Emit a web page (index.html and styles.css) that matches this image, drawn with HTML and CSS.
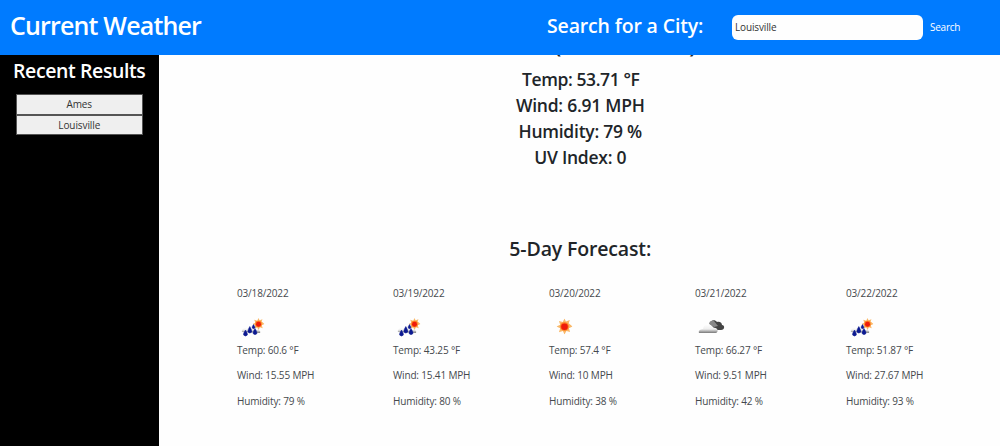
FILE: index.html
```html
<!DOCTYPE html>
<html lang="en">
<head>
<meta charset="utf-8">
<title>Current Weather</title>
<link rel="stylesheet" href="styles.css">
</head>
<body>
<svg class="defs" aria-hidden="true">
  <defs>
    <linearGradient id="cloud" x1="0" y1="0" x2="0" y2="1">
      <stop offset="0" stop-color="#fff"/><stop offset=".55" stop-color="#eee"/><stop offset="1" stop-color="#777"/>
    </linearGradient>
    <symbol id="sun" viewBox="0 0 16 16">
      <path fill="#f9b868" d="M8 0l1.4 3 3.9-1.4-1.1 3.2L16 8l-3.6 1.7 1.2 3.8-3.7-1.1L8 16l-1.6-3.5-4 1.2 1.3-3.9L0 8l3.7-1.7-1.3-3.9 3.9 1.2z"/>
      <circle cx="8" cy="8" r="4.3" fill="#ff7a1e"/><circle cx="8" cy="8.2" r="3.3" fill="#ee1c0a"/>
    </symbol>
    <symbol id="rain" viewBox="0 0 34 28">
      <use href="#sun" x="16.500" y="4" width="12" height="12"/>
      <path fill="url(#cloud)" d="M6 18c-1-3 3-5 5-3 2-4 8-3 9 1 3-1 5 1 4 3z"/>
      <path fill="#0c1a91" stroke="#0c1a91" stroke-width=".5" d="M9.500 16q-2.400 3.500-1.900 5 1.900 2.200 3.800 0 .4-1.500-1.900-5zM13.800 12.500q-2.400 4-1.900 5.500 1.900 2.200 3.900 0 .4-1.500-2-5.500zM19 14.500q-2.400 3.600-1.900 5.100 1.900 2.200 3.900 0 .4-1.500-2-5.100zM17.500 10.500q-1.700 2.300-1.300 3.400 1.300 1.500 2.700 0 .3-1.100-1.400-3.400z"/>
    </symbol>
    <symbol id="clouds" viewBox="0 0 34 28">
      <path fill="#444" d="M16 10c0-4 5-5 7-2 3-1 5 1 5 3 3 0 3 5-1 5h-5z"/>
      <path fill="#888" d="M15 10c0-3 3-4 5-3l4 5-4 1z"/>
      <path fill="url(#cloud)" d="M5 19c-1-3 2-4 4-4 1-6 8-6 10-1 5-1 6 4 3 5H6z"/>
    </symbol>
  </defs>
</svg>
<header class="header">
  <h1 class="brand">Current Weather</h1>
  <h3 class="prompt">Search for a City:</h3>
  <input class="city" type="text" value="Louisville">
  <button class="search" type="button">Search</button>
</header>
<div class="page">
  <aside class="sidebar">
    <h3 class="recent">Recent Results</h3>
    <button class="result" type="button">Ames</button>
    <button class="result" type="button">Louisville</button>
  </aside>
  <main class="main">
    <section class="today">
      <h3 class="place">Louisville (03/17/2022)</h3>
      <h4 class="stat">Temp: 53.71 °F</h4>
      <h4 class="stat">Wind: 6.91 MPH</h4>
      <h4 class="stat">Humidity: 79 %</h4>
      <h4 class="stat">UV Index: 0</h4>
    </section>
    <h3 class="forecast-title">5-Day Forecast:</h3>
    <section class="forecast">
      <div class="day"><p>03/18/2022</p><svg class="icon"><use href="#rain"/></svg><p>Temp: 60.6 °F</p><p>Wind: 15.55 MPH</p><p>Humidity: 79 %</p></div>
      <div class="day"><p>03/19/2022</p><svg class="icon"><use href="#rain"/></svg><p>Temp: 43.25 °F</p><p>Wind: 15.41 MPH</p><p>Humidity: 80 %</p></div>
      <div class="day"><p>03/20/2022</p><svg class="icon"><use href="#sun" x="8.500" y="4.500" width="16" height="16"/></svg><p>Temp: 57.4 °F</p><p>Wind: 10 MPH</p><p>Humidity: 38 %</p></div>
      <div class="day"><p>03/21/2022</p><svg class="icon"><use href="#clouds"/></svg><p>Temp: 66.27 °F</p><p>Wind: 9.51 MPH</p><p>Humidity: 42 %</p></div>
      <div class="day"><p>03/22/2022</p><svg class="icon"><use href="#rain"/></svg><p>Temp: 51.87 °F</p><p>Wind: 27.67 MPH</p><p>Humidity: 93 %</p></div>
    </section>
  </main>
</div>
</body>
</html>
```
FILE: styles.css
```css
* { box-sizing: border-box; }
body {
  margin: 0;
  height: 446px;
  overflow: hidden;
  display: flex;
  flex-direction: column;
  background: #fefefe;
  color: #212529;
  font-family: "Segoe UI", "Open Sans", "Noto Sans", sans-serif;
  font-size: 10px;
}
h1, h3, h4, p { margin: 0; white-space: nowrap; }
h1, h3, h4 { font-weight: 550; }
.defs { position: absolute; width: 0; height: 0; }
.header {
  flex: none;
  height: 55px;
  display: flex;
  align-items: center;
  padding: 0 0 1px 10px;
  background: #007bff;
  color: #fff;
}
.brand { width: 537px; padding-bottom: 4px; font-size: 25px; letter-spacing: -.83px; }
.prompt { width: 185px; padding-bottom: 3px; font-size: 19.500px; letter-spacing: -.15px; }
.city {
  width: 191px;
  height: 25px;
  padding: 0 3px;
  border: 0;
  border-radius: 6px;
  background: #fefefe;
  color: #333;
  font: inherit;
  letter-spacing: -.15px;
}
.search {
  margin-left: 7px;
  padding: 0;
  border: 0;
  background: none;
  color: #fff;
  font: inherit;
  letter-spacing: -.25px;
}
.page { flex: 1; min-height: 0; display: flex; }
.sidebar {
  flex: none;
  width: 158.500px;
  display: flex;
  flex-direction: column;
  align-items: center;
  background: #000;
  color: #fff;
}
.recent { height: 39px; line-height: 31px; font-size: 19.500px; letter-spacing: -.4px; }
.result {
  width: 127px;
  height: 20.500px;
  padding: 0;
  border: 1px solid #555;
  background: #efefef;
  color: #333;
  font: inherit;
  letter-spacing: -.1px;
  line-height: 19px;
}
.main { flex: 1; overflow: hidden; }
.today { text-align: center; margin-top: -22px; padding-left: 2px; }
.place { height: 33px; line-height: 22px; padding-right: 24px; font-size: 23px; letter-spacing: .45px; }
.stat { height: 26.100px; line-height: 26px; font-size: 17.500px; letter-spacing: -.25px; }
.place + .stat { letter-spacing: -.4px; padding-left: 1px; }
.forecast-title { margin-top: 62.600px; height: 34px; line-height: 32px; text-align: center; padding-left: 2px; font-size: 19.500px; letter-spacing: -.15px; }
.forecast {
  display: grid;
  grid-template-columns: 156px 156px 146px 151px 80px;
  margin: 19px 0 0 78.500px;
}
.day { color: #45494d; letter-spacing: -.16px; }
.day p { height: 25.300px; line-height: 15px; }
.icon { display: block; width: 34px; height: 28px; margin: 2.500px 0 1.200px -1px; }
```
